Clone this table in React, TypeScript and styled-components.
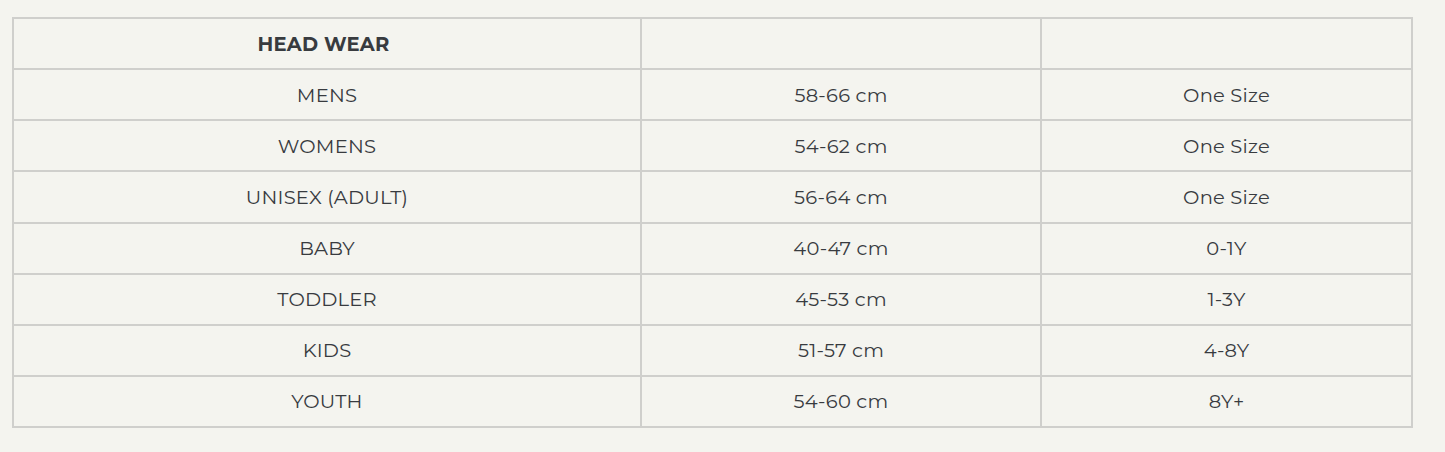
import React from 'react';
import styled, { createGlobalStyle } from 'styled-components';

const GlobalStyle = createGlobalStyle`
  html, body {
    margin: 0;
    padding: 0;
    background: #f4f4ef;
  }
`;

const Page = styled.div`
  padding: 17px 0 0 12px;
  font-family: Montserrat, 'Noto Sans', 'Liberation Sans', sans-serif;
  color: #383b3f;
`;

const SizeTable = styled.table`
  width: 1399px;
  height: 411px;
  border-collapse: collapse;
  table-layout: fixed;
  border: 2px solid #cfcfcc;
`;

const Cell = styled.td<{ $bold?: boolean }>`
  border: 2px solid #cfcfcc;
  text-align: center;
  vertical-align: middle;
  padding: 0 ${(p) => (p.$bold ? '7px' : '0')} 0 0;
  font-size: 19.5px;
  font-weight: ${(p) => (p.$bold ? 700 : 400)};
  letter-spacing: 0.2px;
`;

const rows: Array<[string, string, string]> = [
  ['MENS', '58-66 cm', 'One Size'],
  ['WOMENS', '54-62 cm', 'One Size'],
  ['UNISEX (ADULT)', '56-64 cm', 'One Size'],
  ['BABY', '40-47 cm', '0-1Y'],
  ['TODDLER', '45-53 cm', '1-3Y'],
  ['KIDS', '51-57 cm', '4-8Y'],
  ['YOUTH', '54-60 cm', '8Y+'],
];

export default function App() {
  return (
    <>
      <GlobalStyle />
      <Page>
        <SizeTable>
          <colgroup>
            <col style={{ width: 628 }} />
            <col style={{ width: 400 }} />
            <col style={{ width: 371 }} />
          </colgroup>
          <tbody>
            <tr>
              <Cell $bold>HEAD WEAR</Cell>
              <Cell />
              <Cell />
            </tr>
            {rows.map((r) => (
              <tr key={r[0]}>
                <Cell>{r[0]}</Cell>
                <Cell>{r[1]}</Cell>
                <Cell>{r[2]}</Cell>
              </tr>
            ))}
          </tbody>
        </SizeTable>
      </Page>
    </>
  );
}
